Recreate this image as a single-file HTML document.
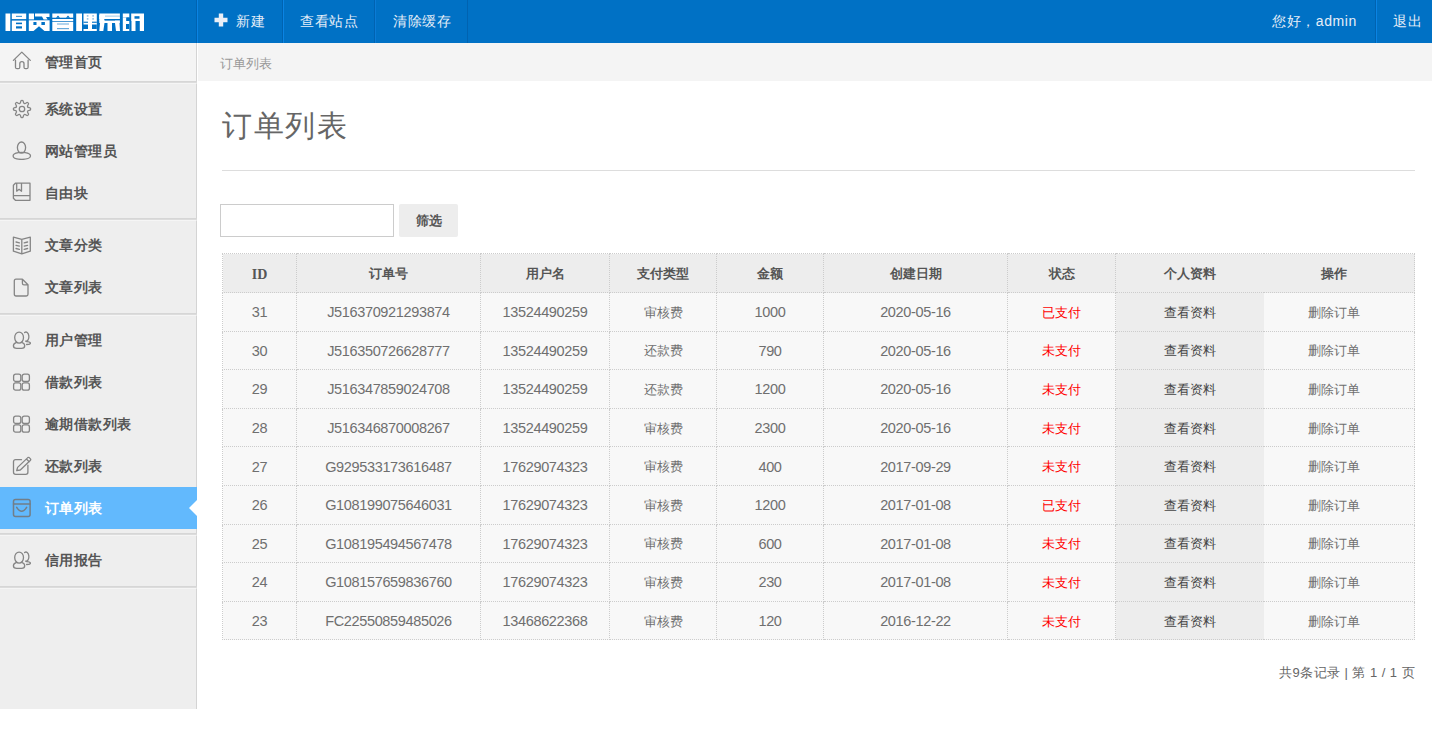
<!DOCTYPE html>
<html><head><meta charset="utf-8">
<style>
*{margin:0;padding:0;box-sizing:border-box}
html,body{width:1432px;height:752px;overflow:hidden;background:#fff;font-family:"Liberation Sans",sans-serif;color:#666}
#hd{position:absolute;left:0;top:0;width:1432px;height:43px;background:#0071c5}
#logo{position:absolute;left:6px;top:11px;-webkit-text-stroke:0.8px #fff;font-size:20px;line-height:26px;font-weight:900;color:#fff;white-space:nowrap;transform-origin:0 0;transform:scale(1.14,0.9)}
.sep{position:absolute;top:0;width:1px;height:43px;background:#0063b1}
.sepl{position:absolute;top:0;width:1px;height:43px;background:#0a84e4}
.plus{position:absolute;left:214px;top:13px}
.nav{position:absolute;top:0;height:43px;line-height:43px;font-size:14px;color:#e6eef8;white-space:nowrap;letter-spacing:0.6px}
#side{position:absolute;left:0;top:0;width:197px;height:709px}
.grp{position:absolute;left:0;width:197px;background:#eee;border-right:1px solid #d4d4d4;border-top:1px solid #f5f5f5}
.hl{position:absolute;left:0;width:197px;height:2px;border-top:1px solid #d6d6d6;background:#dcdcdc}
.act{position:absolute;left:0;width:197px;height:42px;background:#62b9fd}
.tri{position:absolute;right:0;top:13px;width:0;height:0;border-top:8px solid transparent;border-bottom:8px solid transparent;border-right:8px solid #fff}
.ic{position:absolute}
.st{position:absolute;left:45px;height:42px;line-height:42px;font-size:14px;font-weight:bold;color:#555;letter-spacing:0.4px;white-space:nowrap}
.st.w{color:#fff}
#crumb{position:absolute;left:198px;top:43px;width:1234px;height:38px;background:#f4f4f4}
#crumb span{position:absolute;left:22px;top:2px;line-height:38px;font-size:13px;color:#999}
#title{position:absolute;left:222px;top:106px;font-size:30px;color:#666;line-height:40px;letter-spacing:1.6px;white-space:nowrap}
#rule{position:absolute;left:222px;top:170px;width:1193px;height:1px;background:#ddd}
#inp{position:absolute;left:220px;top:204px;width:174px;height:33px;border:1px solid #ccc;background:#fff}
#btn{position:absolute;left:399px;top:204px;width:59px;height:33px;background:#ededed;border-radius:2px;text-align:center;line-height:33px;font-size:13px;font-weight:bold;color:#555}
table{position:absolute;left:222px;top:253px;border-collapse:collapse;table-layout:fixed;width:1192px}
td,th{border:1px dotted #ccc;text-align:center;font-size:14.5px;letter-spacing:-0.35px;color:#6f6f6f;height:38.6px;padding:1px 0 0 0;background:#f8f8f8;white-space:nowrap}
.c{font-size:13.2px;letter-spacing:0;position:relative;top:0.5px}
th .c{top:0.4px}
.idh{font-family:"Liberation Serif",serif;font-size:14px;letter-spacing:0;position:relative;top:1px}
th{background:#ededed;font-weight:bold;color:#555;height:39px;padding-top:1px}
td.red{color:#f00}
td.v{background:#ededed;color:#444;font-weight:normal;border-right:none}
th.v{border-right:none}
td.d,th.d{border-left:none;padding-right:9px}
#pg{position:absolute;right:17px;top:662px;font-size:13px;color:#666;line-height:22px;white-space:nowrap;letter-spacing:0.45px}

</style></head><body>
<div id="hd">
  <svg id="logosvg" width="150" height="43" viewBox="0 0 150 43" style="position:absolute;left:0;top:0">
<g fill="#fff">
<!-- 借 -->
<rect x="5.5" y="13.5" width="4.8" height="17.5"/>
<rect x="11.8" y="13.5" width="14.4" height="5.6"/>
<rect x="11.8" y="20.6" width="14.3" height="10.4"/>
<!-- 贷 -->
<rect x="28.8" y="13.5" width="5.2" height="5.9"/>
<path d="M35 13.5 H49.5 V17 H46 L47.6 19.4 H43.6 L42 16.6 H35 Z"/>
<rect x="28.8" y="20.3" width="20.8" height="10.7"/>
<!-- 管 -->
<rect x="52.3" y="13.5" width="20.9" height="4.2"/>
<rect x="52.3" y="19" width="20.9" height="2.2"/>
<rect x="52.3" y="21.9" width="20.9" height="9.1"/>
<!-- 理 -->
<rect x="76.2" y="13.5" width="5.8" height="17.5"/>
<rect x="83.5" y="13.5" width="13.3" height="17.5"/>
<!-- 系 -->
<rect x="99.3" y="13.5" width="20.6" height="1.8"/>
<rect x="99.3" y="15" width="20.6" height="4"/>
<rect x="99.3" y="20.4" width="20.6" height="2.6"/>
<rect x="99.3" y="15" width="5" height="6"/>
<path d="M100 23 H104.5 L103.3 31 H99.3Z M107.5 23 H112 V31 H107.5Z M115 23 H119.5 L120 31 H116Z"/>
<!-- 统 -->
<rect x="122.8" y="13.5" width="6.5" height="4"/>
<rect x="122.8" y="17.5" width="3.5" height="3.5"/>
<rect x="122.8" y="21" width="6.5" height="10"/>
<rect x="131.2" y="13.5" width="12.8" height="7.5"/>
<rect x="131.5" y="21" width="4" height="10"/>
<rect x="139.8" y="21" width="4.2" height="10"/>
</g>
<g fill="#0071c5">
<rect x="16" y="15.8" width="6" height="1.2" opacity="0.7"/>
<rect x="16" y="22.6" width="6" height="1.6"/>
<rect x="16" y="26.3" width="6" height="2.2"/>
<rect x="33.4" y="22" width="3.1" height="3"/>
<rect x="41.4" y="22" width="3.5" height="3"/>
<path d="M33.5 31 L39 26.3 L44.5 31Z"/>
<path d="M56 17.7 L58 15.5 L60 17.7Z M66 17.7 L68 15.5 L70 17.7Z"/>
<rect x="57" y="23.5" width="12" height="1" opacity="0.6"/>
<rect x="57" y="28" width="12" height="1.2" opacity="0.6"/>
<rect x="86.8" y="15.2" width="1.6" height="1.4" opacity="0.5"/>
<rect x="92.3" y="15.2" width="1.6" height="1.4" opacity="0.5"/>
<rect x="86.8" y="18.2" width="1.6" height="1.4" opacity="0.5"/>
<rect x="92.3" y="18.2" width="1.6" height="1.4" opacity="0.5"/>
<rect x="83.5" y="21.6" width="4.5" height="1.4" opacity="0.8"/>
<rect x="92" y="21.6" width="4.8" height="1.4" opacity="0.8"/>
<rect x="82" y="24.5" width="6" height="4.5"/>
<rect x="92" y="24.5" width="4.8" height="4.5"/>
<rect x="105" y="15.5" width="15" height="1.3" opacity="0.3"/>
<rect x="105" y="19" width="10" height="1.4"/>
<rect x="126.5" y="17.5" width="2.8" height="3.3"/>
<rect x="126" y="24" width="3.3" height="5"/>
<rect x="134.5" y="16.2" width="5" height="2.5"/>
</g>
</svg>
  <div class="sep" style="left:196px"></div><div class="sepl" style="left:197px"></div>
  <svg class="plus" width="14" height="14" viewBox="0 0 14 14"><path d="M4.8 0.5h4.4v4.3h4.3v4.4h-4.3v4.3h-4.4v-4.3h-4.3v-4.4h4.3z" fill="#e9eff7"/></svg>
  <div class="nav" style="left:236px">新建</div>
  <div class="sep" style="left:282px"></div><div class="sepl" style="left:283px"></div>
  <div class="nav" style="left:300px">查看站点</div>
  <div class="sep" style="left:374px"></div><div class="sepl" style="left:375px;background:#0a7bd6"></div>
  <div class="nav" style="left:393px">清除缓存</div>
  <div class="sep" style="left:467px"></div>
  <div class="nav" style="left:1272px">您好，admin</div>
  <div class="sep" style="left:1375px"></div><div class="sepl" style="left:1376px"></div>
  <div class="nav" style="left:1393px">退出</div>
</div>
<div id="side">
<div class="grp" style="top:43px;height:38px;background:#f4f4f4;border-top:none"></div>
<div class="hl" style="top:81px"></div>
<div class="grp" style="top:83px;height:135px"></div>
<div class="hl" style="top:218px"></div>
<div class="grp" style="top:220px;height:93px"></div>
<div class="hl" style="top:313px"></div>
<div class="grp" style="top:315px;height:218px"></div>
<div class="hl" style="top:533px"></div>
<div class="grp" style="top:535px;height:51px"></div>
<div class="hl" style="top:586px"></div>
<div class="grp" style="top:588px;height:121px"></div>
<div class="act" style="top:487px"><div class="tri"></div></div>
<svg class="ic" width="20" height="20" viewBox="0 0 20 20" style="left:12px;top:50px"><path d="M1.4 10.4 L9.8 2.1 L18.3 10.4 M3.5 10.2 V17.2 Q3.5 18.7 5 18.7 H6.3 Q7.8 18.7 7.8 17.2 V13.8 Q7.8 11.7 9.9 11.7 Q12 11.7 12 13.8 V17.2 Q12 18.7 13.5 18.7 H14.6 Q16.1 18.7 16.1 17.2 V10.2" fill="none" stroke="#858585" stroke-width="1.3" stroke-linejoin="round" stroke-linecap="round"/></svg>
<div class="st" style="top:41px">管理首页</div>
<svg class="ic" width="20" height="20" viewBox="0 0 20 20" style="left:12px;top:99px"><path d="M7.70 4.46 C8.97 4.09 8.35 1.87 9.24 1.53 Q10.00 1.25 10.76 1.53 C11.65 1.87 11.03 4.09 12.30 4.46 C13.45 5.09 14.59 3.08 15.45 3.47 Q16.19 3.81 16.53 4.55 C16.92 5.41 14.91 6.55 15.54 7.70 C15.91 8.97 18.13 8.35 18.47 9.24 Q18.75 10.00 18.47 10.76 C18.13 11.65 15.91 11.03 15.54 12.30 C14.91 13.45 16.92 14.59 16.53 15.45 Q16.19 16.19 15.45 16.53 C14.59 16.92 13.45 14.91 12.30 15.54 C11.03 15.91 11.65 18.13 10.76 18.47 Q10.00 18.75 9.24 18.47 C8.35 18.13 8.97 15.91 7.70 15.54 C6.55 14.91 5.41 16.92 4.55 16.53 Q3.81 16.19 3.47 15.45 C3.08 14.59 5.09 13.45 4.46 12.30 C4.09 11.03 1.87 11.65 1.53 10.76 Q1.25 10.00 1.53 9.24 C1.87 8.35 4.09 8.97 4.46 7.70 C5.09 6.55 3.08 5.41 3.47 4.55 Q3.81 3.81 4.55 3.47 C5.41 3.08 6.55 5.09 7.70 4.46 Z" fill="none" stroke="#858585" stroke-width="1.3" stroke-linejoin="round" stroke-linecap="round"/><circle cx="10" cy="10" r="2.7" fill="none" stroke="#858585" stroke-width="1.3" stroke-linejoin="round" stroke-linecap="round"/></svg>
<div class="st" style="top:88px">系统设置</div>
<svg class="ic" width="20" height="20" viewBox="0 0 20 20" style="left:12px;top:140px"><ellipse cx="9.5" cy="7.6" rx="4.1" ry="5.6" fill="none" stroke="#858585" stroke-width="1.3" stroke-linejoin="round" stroke-linecap="round"/><path d="M6.3 12.6 C3.2 13.1 1.1 14.3 1.1 16 C1.1 18 5 19.4 9.8 19.4 C14.6 19.4 18.5 18 18.5 16 C18.5 14.3 16.4 13.1 13.2 12.6 M6.3 12.6 C8.5 12.3 11 12.3 13.2 12.6" fill="none" stroke="#858585" stroke-width="1.3" stroke-linejoin="round" stroke-linecap="round"/></svg>
<div class="st" style="top:130px">网站管理员</div>
<svg class="ic" width="20" height="20" viewBox="0 0 20 20" style="left:12px;top:182px"><path d="M3.4 1.2 H18 V18.3 H3.4 L1.4 16.3 V3.2 Z M1.6 13.6 H18 M4.7 1.2 V9.2 L7.1 7.3 L9.5 9.2 V1.2" fill="none" stroke="#858585" stroke-width="1.3" stroke-linejoin="round" stroke-linecap="round"/></svg>
<div class="st" style="top:172px">自由块</div>
<svg class="ic" width="20" height="20" viewBox="0 0 20 20" style="left:12px;top:235px"><path d="M1.4 2.2 L9.8 4.4 L18.3 2.2 V16.2 L9.8 18.8 L1.4 16.2 Z M9.8 4.4 V18.8 M4 7 L7.4 7.9 M4 10.3 L7.4 11.2 M4 13.5 L7.4 14.4 M15.6 7 L12.2 7.9 M15.6 10.3 L12.2 11.2 M15.6 13.5 L12.2 14.4" fill="none" stroke="#858585" stroke-width="1.3" stroke-linejoin="round" stroke-linecap="round"/></svg>
<div class="st" style="top:224px">文章分类</div>
<svg class="ic" width="20" height="20" viewBox="0 0 20 20" style="left:12px;top:277px"><path d="M2.3 4 C2.3 2.9 2.9 2.2 4 2.2 H10.4 L16 7.8 V17.3 C16 18.4 15.4 19 14.3 19 H4 C2.9 19 2.3 18.4 2.3 17.3 Z M10.4 2.2 V6.2 C10.4 7.2 11 7.8 12 7.8 H16" fill="none" stroke="#858585" stroke-width="1.3" stroke-linejoin="round" stroke-linecap="round"/></svg>
<div class="st" style="top:266px">文章列表</div>
<svg class="ic" width="20" height="20" viewBox="0 0 20 20" style="left:12px;top:330px"><ellipse cx="7.1" cy="7.6" rx="4.4" ry="5.5" fill="none" stroke="#858585" stroke-width="1.3" stroke-linejoin="round" stroke-linecap="round"/><path d="M4.6 12.4 C2.7 13 1.4 14.3 1.4 15.8 C1.4 17.4 2.8 18.4 4.8 18.4 H9.6 C11.5 18.4 12.7 17.4 12.7 15.8 C12.7 14.3 11.5 13 9.6 12.4 M12.6 2.6 A2.9 4.6 0 1 1 13.6 11.2 M14.8 11.7 C17 11.9 18.4 12.4 18.4 13.2 C18.4 14 17 14.5 14.6 14.5" fill="none" stroke="#858585" stroke-width="1.3" stroke-linejoin="round" stroke-linecap="round"/></svg>
<div class="st" style="top:319px">用户管理</div>
<svg class="ic" width="20" height="20" viewBox="0 0 20 20" style="left:12px;top:373px"><rect x="1.6" y="1.2" width="7.2" height="7.3" rx="2" fill="none" stroke="#858585" stroke-width="1.3" stroke-linejoin="round" stroke-linecap="round"/><rect x="10.2" y="1.2" width="7.2" height="7.3" rx="2" fill="none" stroke="#858585" stroke-width="1.3" stroke-linejoin="round" stroke-linecap="round"/><rect x="1.6" y="9.9" width="7.2" height="7.3" rx="2" fill="none" stroke="#858585" stroke-width="1.3" stroke-linejoin="round" stroke-linecap="round"/><rect x="10.2" y="9.9" width="7.2" height="7.3" rx="2" fill="none" stroke="#858585" stroke-width="1.3" stroke-linejoin="round" stroke-linecap="round"/></svg>
<div class="st" style="top:361px">借款列表</div>
<svg class="ic" width="20" height="20" viewBox="0 0 20 20" style="left:12px;top:415px"><rect x="1.6" y="1.2" width="7.2" height="7.3" rx="2" fill="none" stroke="#858585" stroke-width="1.3" stroke-linejoin="round" stroke-linecap="round"/><rect x="10.2" y="1.2" width="7.2" height="7.3" rx="2" fill="none" stroke="#858585" stroke-width="1.3" stroke-linejoin="round" stroke-linecap="round"/><rect x="1.6" y="9.9" width="7.2" height="7.3" rx="2" fill="none" stroke="#858585" stroke-width="1.3" stroke-linejoin="round" stroke-linecap="round"/><rect x="10.2" y="9.9" width="7.2" height="7.3" rx="2" fill="none" stroke="#858585" stroke-width="1.3" stroke-linejoin="round" stroke-linecap="round"/></svg>
<div class="st" style="top:403px">逾期借款列表</div>
<svg class="ic" width="20" height="20" viewBox="0 0 20 20" style="left:12px;top:456px"><path d="M9.5 3.7 H3.6 C2.3 3.7 1.5 4.5 1.5 5.8 V16.3 C1.5 17.6 2.3 18.4 3.6 18.4 H13.8 C15.1 18.4 15.9 17.6 15.9 16.3 V9.2" fill="none" stroke="#858585" stroke-width="1.3" stroke-linejoin="round" stroke-linecap="round"/><path d="M4.7 14.6 L5.6 11.4 L15.8 1.6 Q16.5 1 17.2 1.6 L18.5 2.9 Q19.1 3.6 18.5 4.3 L8.3 14 Z M14.4 3 L17.2 5.8" fill="none" stroke="#858585" stroke-width="1.3" stroke-linejoin="round" stroke-linecap="round"/></svg>
<div class="st" style="top:445px">还款列表</div>
<svg class="ic" width="20" height="20" viewBox="0 0 20 20" style="left:12px;top:498px"><rect x="1.5" y="1.5" width="16.6" height="16.9" rx="2" fill="none" stroke="#727e88" stroke-width="1.5" stroke-linejoin="round" stroke-linecap="round"/><path d="M1.5 6 H18.1 M4.7 9.3 Q9.65 17.3 14.6 9.3" fill="none" stroke="#727e88" stroke-width="1.5" stroke-linejoin="round" stroke-linecap="round"/></svg>
<div class="st w" style="top:487px">订单列表</div>
<svg class="ic" width="20" height="20" viewBox="0 0 20 20" style="left:12px;top:550px"><ellipse cx="7.1" cy="7.6" rx="4.4" ry="5.5" fill="none" stroke="#858585" stroke-width="1.3" stroke-linejoin="round" stroke-linecap="round"/><path d="M4.6 12.4 C2.7 13 1.4 14.3 1.4 15.8 C1.4 17.4 2.8 18.4 4.8 18.4 H9.6 C11.5 18.4 12.7 17.4 12.7 15.8 C12.7 14.3 11.5 13 9.6 12.4 M12.6 2.6 A2.9 4.6 0 1 1 13.6 11.2 M14.8 11.7 C17 11.9 18.4 12.4 18.4 13.2 C18.4 14 17 14.5 14.6 14.5" fill="none" stroke="#858585" stroke-width="1.3" stroke-linejoin="round" stroke-linecap="round"/></svg>
<div class="st" style="top:539px">信用报告</div>
</div>
<div id="crumb"><span>订单列表</span></div>
<div id="title">订单列表</div>
<div id="rule"></div>
<div id="inp"></div>
<div id="btn">筛选</div>
<table>
<colgroup><col style="width:74px"><col style="width:184px"><col style="width:129px"><col style="width:107px"><col style="width:107px"><col style="width:184px"><col style="width:108px"><col style="width:148px"><col style="width:151px"></colgroup>
<tr><th><span class="idh">ID</span></th><th><span class="c">订单号</span></th><th><span class="c">用户名</span></th><th><span class="c">支付类型</span></th><th><span class="c">金额</span></th><th><span class="c">创建日期</span></th><th><span class="c">状态</span></th><th class="v"><span class="c">个人资料</span></th><th class="d"><span class="c">操作</span></th></tr>
<tr><td>31</td><td>J516370921293874</td><td>13524490259</td><td><span class="c">审核费</span></td><td>1000</td><td>2020-05-16</td><td class="red"><span class="c">已支付</span></td><td class="v"><span class="c">查看资料</span></td><td class="d"><span class="c">删除订单</span></td></tr>
<tr><td>30</td><td>J516350726628777</td><td>13524490259</td><td><span class="c">还款费</span></td><td>790</td><td>2020-05-16</td><td class="red"><span class="c">未支付</span></td><td class="v"><span class="c">查看资料</span></td><td class="d"><span class="c">删除订单</span></td></tr>
<tr><td>29</td><td>J516347859024708</td><td>13524490259</td><td><span class="c">还款费</span></td><td>1200</td><td>2020-05-16</td><td class="red"><span class="c">未支付</span></td><td class="v"><span class="c">查看资料</span></td><td class="d"><span class="c">删除订单</span></td></tr>
<tr><td>28</td><td>J516346870008267</td><td>13524490259</td><td><span class="c">审核费</span></td><td>2300</td><td>2020-05-16</td><td class="red"><span class="c">未支付</span></td><td class="v"><span class="c">查看资料</span></td><td class="d"><span class="c">删除订单</span></td></tr>
<tr><td>27</td><td>G929533173616487</td><td>17629074323</td><td><span class="c">审核费</span></td><td>400</td><td>2017-09-29</td><td class="red"><span class="c">未支付</span></td><td class="v"><span class="c">查看资料</span></td><td class="d"><span class="c">删除订单</span></td></tr>
<tr><td>26</td><td>G108199075646031</td><td>17629074323</td><td><span class="c">审核费</span></td><td>1200</td><td>2017-01-08</td><td class="red"><span class="c">已支付</span></td><td class="v"><span class="c">查看资料</span></td><td class="d"><span class="c">删除订单</span></td></tr>
<tr><td>25</td><td>G108195494567478</td><td>17629074323</td><td><span class="c">审核费</span></td><td>600</td><td>2017-01-08</td><td class="red"><span class="c">未支付</span></td><td class="v"><span class="c">查看资料</span></td><td class="d"><span class="c">删除订单</span></td></tr>
<tr><td>24</td><td>G108157659836760</td><td>17629074323</td><td><span class="c">审核费</span></td><td>230</td><td>2017-01-08</td><td class="red"><span class="c">未支付</span></td><td class="v"><span class="c">查看资料</span></td><td class="d"><span class="c">删除订单</span></td></tr>
<tr><td>23</td><td>FC22550859485026</td><td>13468622368</td><td><span class="c">审核费</span></td><td>120</td><td>2016-12-22</td><td class="red"><span class="c">未支付</span></td><td class="v"><span class="c">查看资料</span></td><td class="d"><span class="c">删除订单</span></td></tr>
</table>
<div id="pg">共9条记录 | 第 1 / 1 页</div>
</body></html>
